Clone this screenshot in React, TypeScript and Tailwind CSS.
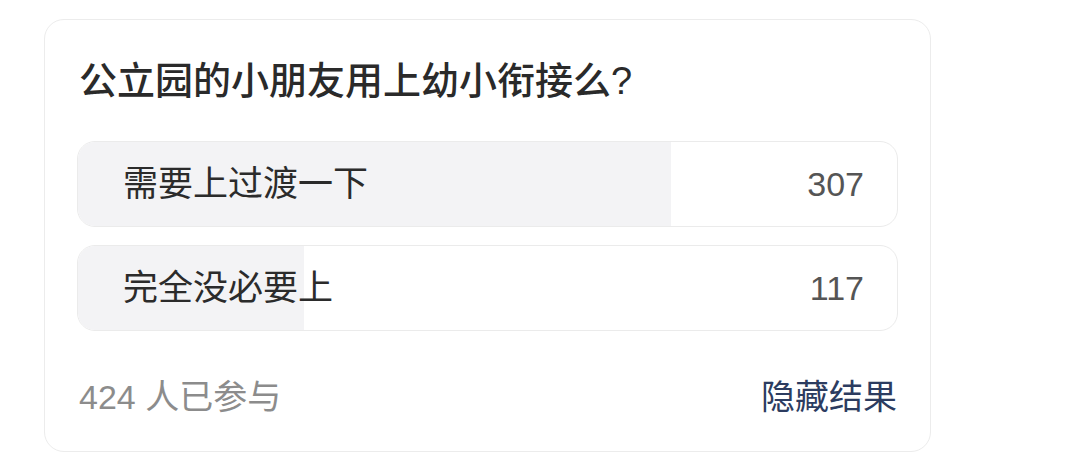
const options = [
  { label: '需要上过渡一下', count: 307 },
  { label: '完全没必要上', count: 117 },
];

const font = { fontFamily: '"Liberation Sans", "Noto Sans CJK SC", sans-serif' };

export default function App() {
  const total = options.reduce((sum, o) => sum + o.count, 0);

  return (
    <div className="w-[1080px] h-[458px] bg-white pl-[44px] pt-[19px]" style={font}>
      <div className="w-[887px] h-[433px] rounded-[20px] border border-[#ececec] bg-white px-[32px] pt-[37px]">
        <h1 className="text-[38px] leading-[48px] font-medium text-[#2a2a2a] pl-[2px]">
          公立园的小朋友用上幼小衔接么?
        </h1>

        <div className="mt-[36px] flex flex-col gap-[18px]">
          {options.map((o) => (
            <div
              key={o.label}
              className="relative h-[86px] rounded-[18px] border border-[#ebebeb] bg-white overflow-hidden"
            >
              <div
                className="absolute inset-y-0 left-0 bg-[#f3f3f5]"
                style={{ width: `${(o.count / total) * 100}%` }}
              />
              <div className="relative h-full flex items-center justify-between pl-[45px] pr-[33px]">
                <span className="text-[35px] text-[#2b2b2b]">{o.label}</span>
                <span className="text-[34px] text-[#555555]">{o.count}</span>
              </div>
            </div>
          ))}
        </div>

        <div className="mt-[42px] flex items-center justify-between pl-[2px] pr-[1px] leading-[48px]">
          <span className="text-[34px] text-[#8c8c8c]">{total} 人已参与</span>
          <button className="text-[34px] text-[#2c3c60]">隐藏结果</button>
        </div>
      </div>
    </div>
  );
}
